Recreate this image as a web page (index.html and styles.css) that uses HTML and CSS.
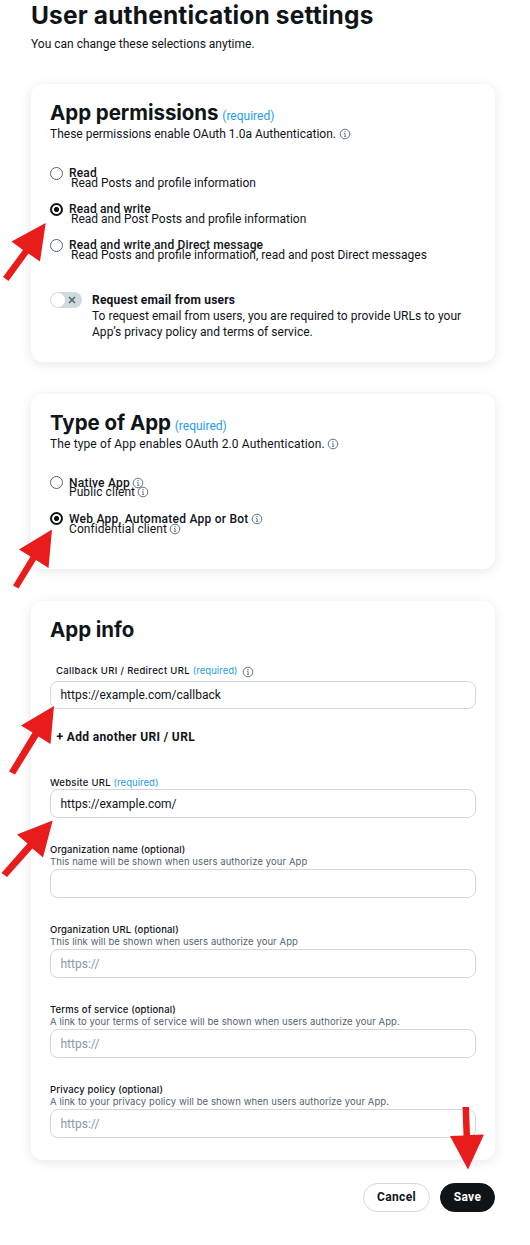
FILE: index.html
```html
<!DOCTYPE html>
<html lang="en">
<head>
    <meta charset="UTF-8">
    <meta name="viewport" content="width=device-width, initial-scale=1.0">
    <title>User authentication settings</title>
    <link rel="stylesheet" href="styles.css">
</head>
<body>
    <svg width="0" height="0" class="sprite">
        <symbol id="info" viewBox="0 0 12 12">
            <circle cx="6" cy="6" r="4.8" fill="none" stroke="currentColor" stroke-width="0.9"/>
            <path d="M5 5.5h1.1v2.9M5 8.4h2.2" fill="none" stroke="currentColor" stroke-width="0.8"/>
            <circle cx="6" cy="3.7" r="0.65" fill="currentColor"/>
        </symbol>
    </svg>

    <div class="page">
        <h1>User authentication settings</h1>
        <p class="intro">You can change these selections anytime.</p>

        <section class="card permissions">
            <h2>App permissions <span class="required">(required)</span></h2>
            <p class="card-sub">These permissions enable OAuth 1.0a Authentication. <svg class="info"><use href="#info"/></svg></p>

            <div class="options">
                <label class="option">
                    <span class="radio"></span>
                    <span class="option-text">
                        <span class="option-label">Read</span>
                        <span class="option-desc">Read Posts and profile information</span>
                    </span>
                </label>
                <label class="option">
                    <span class="radio checked"></span>
                    <span class="option-text">
                        <span class="option-label">Read and write</span>
                        <span class="option-desc">Read and Post Posts and profile information</span>
                    </span>
                </label>
                <label class="option">
                    <span class="radio"></span>
                    <span class="option-text">
                        <span class="option-label">Read and write and Direct message</span>
                        <span class="option-desc">Read Posts and profile information, read and post Direct messages</span>
                    </span>
                </label>
            </div>

            <div class="email-request">
                <span class="toggle">
                    <span class="knob"></span>
                    <svg class="cross" viewBox="0 0 8 8"><path d="M1 1l6 6M7 1L1 7"/></svg>
                </span>
                <div>
                    <div class="email-title">Request email from users</div>
                    <div class="email-desc">To request email from users, you are required to provide URLs to your<br>App’s privacy policy and terms of service.</div>
                </div>
            </div>
        </section>

        <section class="card app-type">
            <h2>Type of App <span class="required">(required)</span></h2>
            <p class="card-sub">The type of App enables OAuth 2.0 Authentication. <svg class="info"><use href="#info"/></svg></p>

            <div class="options">
                <label class="option">
                    <span class="radio"></span>
                    <span class="option-text">
                        <span class="option-label">Native App <svg class="info"><use href="#info"/></svg></span>
                        <span class="option-desc">Public client <svg class="info"><use href="#info"/></svg></span>
                    </span>
                </label>
                <label class="option">
                    <span class="radio checked"></span>
                    <span class="option-text">
                        <span class="option-label">Web App, Automated App or Bot <svg class="info"><use href="#info"/></svg></span>
                        <span class="option-desc">Confidential client <svg class="info"><use href="#info"/></svg></span>
                    </span>
                </label>
            </div>
        </section>

        <section class="card app-info">
            <h2>App info</h2>

            <div class="field callback">
                <label class="field-label" for="callback">Callback URI / Redirect URL <span class="req-small">(required)</span> <svg class="info"><use href="#info"/></svg></label>
                <input type="text" id="callback" value="https://example.com/callback">
            </div>
            <div class="add-url">+ Add another URI / URL</div>

            <div class="field">
                <label class="field-label" for="website">Website URL <span class="req-small">(required)</span></label>
                <input type="text" id="website" value="https://example.com/">
            </div>
            <div class="field">
                <label class="field-label" for="orgName">Organization name (optional)</label>
                <div class="hint">This name will be shown when users authorize your App</div>
                <input type="text" id="orgName">
            </div>
            <div class="field">
                <label class="field-label" for="orgUrl">Organization URL (optional)</label>
                <div class="hint">This link will be shown when users authorize your App</div>
                <input type="text" id="orgUrl" placeholder="https://">
            </div>
            <div class="field">
                <label class="field-label" for="terms">Terms of service (optional)</label>
                <div class="hint">A link to your terms of service will be shown when users authorize your App.</div>
                <input type="text" id="terms" placeholder="https://">
            </div>
            <div class="field">
                <label class="field-label" for="privacy">Privacy policy (optional)</label>
                <div class="hint">A link to your privacy policy will be shown when users authorize your App.</div>
                <input type="text" id="privacy" placeholder="https://">
            </div>
        </section>

        <div class="actions">
            <button class="btn cancel">Cancel</button>
            <button class="btn save">Save</button>
        </div>
    </div>

    <!-- Callout arrows -->
    <svg class="arrows" viewBox="0 0 530 1245">
        <polygon points="45.7,223 40,261.5 28.5,253.5 8.5,281 3,277 23,250 11.5,241.5"/>
        <polygon points="52,529.5 48.5,568 36,560 18.5,588.5 13,585.5 30.5,556.5 19,549.5"/>
        <polygon points="54,706 50.5,744 38.5,736.5 15,774.5 9,771.5 32.5,732.5 21,725.5"/>
        <polygon points="52.7,820.5 43,857.5 32.5,848.5 7,877 1.5,873 27.5,843.5 17,834.5"/>
        <polygon points="468,1169.5 450,1136 463.5,1135.5 462.5,1107 469,1107 470,1135 484,1134.5"/>
    </svg>
</body>
</html>
```
FILE: styles.css
```css
:root {
    --text: #0f1419;
    --muted: #536471;
    --border: #cfd9de;
    --blue: #1d9bf0;
    --arrow: #e91c1c;
}

* {
    box-sizing: border-box;
}

body {
    position: relative;
    width: 530px;
    height: 1245px;
    margin: 0;
    background: #fff;
    color: var(--text);
    font-family: Roboto, "Liberation Sans", sans-serif;
    font-size: 12px;
    line-height: 16px;
    overflow: hidden;
}

.sprite {
    position: absolute;
}

.page {
    padding: 0 35px 0 31px;
}

h1, h2, p {
    margin: 0;
    white-space: nowrap;
}

h1, h2 {
    font-family: Inter, Roboto, sans-serif;
}

h1 {
    font-size: 24.5px;
    line-height: 30px;
    font-weight: 700;
    letter-spacing: 0.15px;
}

.intro {
    margin-top: 6px;
}

.card {
    margin-top: 32px;
    padding: 17px 19px 22px;
    border-radius: 12px;
    background: #fff;
    box-shadow: 0 2px 12px rgba(60, 60, 60, 0.12);
}

.app-type {
    padding-bottom: 21px;
}

h2 {
    height: 24px;
    font-size: 20.5px;
    line-height: 24px;
    font-weight: 700;
    letter-spacing: -0.05px;
}

.required {
    margin-left: -1px;
    color: var(--blue);
    font-family: Roboto, sans-serif;
    font-size: 12px;
    font-weight: 400;
    line-height: 12px;
    letter-spacing: 0;
}

.card-sub {
    margin-top: 1px;
}

.app-type .card-sub {
    letter-spacing: 0.13px;
}

.info {
    width: 12px;
    height: 12px;
    margin-left: -1px;
    color: var(--muted);
    vertical-align: -2px;
}

.permissions .info {
    margin-left: 0;
}

.options {
    margin-top: 25px;
}

.app-type .options {
    margin-top: 24px;
}

.option {
    display: flex;
    gap: 6px;
    height: 36px;
}

.radio {
    flex: none;
    width: 13px;
    height: 13px;
    border: 1px solid var(--muted);
    border-radius: 50%;
}

.radio.checked {
    border: 2px solid var(--text);
    background: radial-gradient(circle, var(--text) 2.2px, #fff 2.9px);
}

.option-text {
    padding-top: 1px;
    white-space: nowrap;
}

.option-label, .option-desc {
    display: block;
    height: 10px;
    line-height: 10px;
}

.option-label {
    font-weight: 500;
    letter-spacing: 0.15px;
}

.app-type .option-label {
    letter-spacing: 0.24px;
}

.app-type .option-desc {
    letter-spacing: 0.08px;
}

.app-type .option:first-child .option-desc {
    margin-top: -1px;
}

.permissions .option-desc {
    padding-left: 2px;
}

.email-request {
    display: flex;
    gap: 10px;
    margin-top: 17px;
    white-space: nowrap;
}

.toggle {
    display: flex;
    align-items: center;
    justify-content: space-between;
    width: 32px;
    height: 16px;
    padding: 1px 6px 1px 1px;
    border-radius: 8px;
    background: var(--border);
}

.knob {
    width: 14px;
    height: 14px;
    border-radius: 50%;
    background: #fff;
}

.cross {
    width: 8px;
    height: 8px;
    stroke: var(--muted);
    stroke-width: 1.5;
}

.email-title {
    font-weight: 700;
    letter-spacing: 0.19px;
}

.email-desc {
    letter-spacing: 0.03px;
}

.field {
    margin-top: 26px;
}

.field-label, .hint {
    display: block;
    font-family: Inter, Roboto, sans-serif;
    font-size: 9.5px;
    line-height: 12px;
    height: 12px;
    white-space: nowrap;
}

.field-label {
    font-weight: 500;
    letter-spacing: 0.14px;
}

.hint {
    height: 13px;
    color: var(--muted);
    letter-spacing: 0.08px;
}

.req-small {
    color: var(--blue);
    font-weight: 400;
    letter-spacing: 0.05px;
}

input {
    display: block;
    width: 426px;
    height: 29px;
    padding: 0 9.5px;
    border: 1px solid var(--border);
    border-radius: 8px;
    background: #fff;
    color: var(--text);
    font: inherit;
}

input::placeholder {
    color: #829aab;
    opacity: 1;
}

.callback {
    margin-top: 23px;
}

.callback .field-label {
    height: 16px;
    padding-left: 6px;
    letter-spacing: 0.33px;
}

.callback .info {
    margin-left: 1.5px;
    vertical-align: -4px;
}

.callback input {
    height: 28px;
}

.add-url {
    margin: 20px 0 0 6.5px;
    font-weight: 700;
    letter-spacing: 0.36px;
}

.add-url + .field {
    margin-top: 32px;
}

.add-url + .field .field-label {
    letter-spacing: 0.27px;
}

.add-url + .field .req-small {
    letter-spacing: 0.05px;
}

.actions {
    display: flex;
    justify-content: flex-end;
    gap: 10px;
    margin-top: 23px;
}

.btn {
    height: 29px;
    padding: 0 0 2px;
    border: 1px solid var(--border);
    border-radius: 15px;
    background: #fff;
    color: var(--text);
    font: inherit;
    font-weight: 700;
    letter-spacing: 0.35px;
}

.cancel {
    width: 67px;
}

.save {
    width: 55px;
    border-color: var(--text);
    background: var(--text);
    color: #fff;
}

.arrows {
    position: absolute;
    top: 0;
    left: 0;
    width: 530px;
    height: 1245px;
    fill: var(--arrow);
    pointer-events: none;
}
```
